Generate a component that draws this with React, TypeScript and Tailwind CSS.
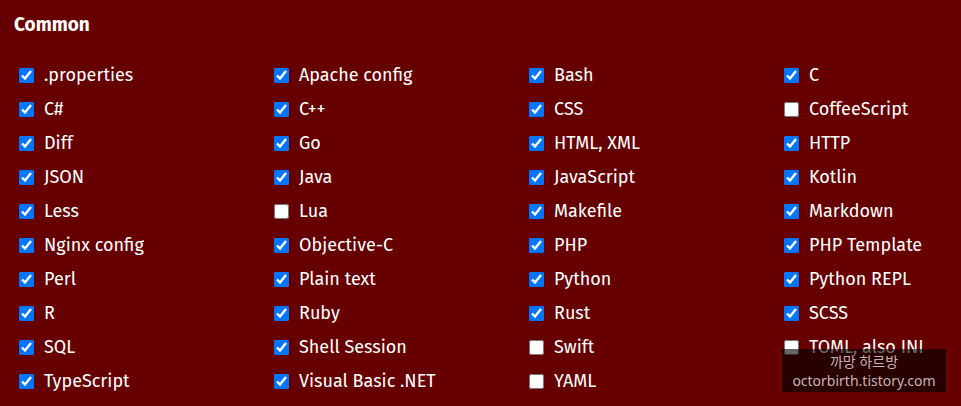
import React from "react";

const items: [string, boolean][] = [
  [".properties", true], ["Apache config", true], ["Bash", true], ["C", true],
  ["C#", true], ["C++", true], ["CSS", true], ["CoffeeScript", false],
  ["Diff", true], ["Go", true], ["HTML, XML", true], ["HTTP", true],
  ["JSON", true], ["Java", true], ["JavaScript", true], ["Kotlin", true],
  ["Less", true], ["Lua", false], ["Makefile", true], ["Markdown", true],
  ["Nginx config", true], ["Objective-C", true], ["PHP", true], ["PHP Template", true],
  ["Perl", true], ["Plain text", true], ["Python", true], ["Python REPL", true],
  ["R", true], ["Ruby", true], ["Rust", true], ["SCSS", true],
  ["SQL", true], ["Shell Session", true], ["Swift", false], ["TOML, also INI", false],
  ["TypeScript", true], ["Visual Basic .NET", true], ["YAML", false], ["", false],
];

export default function App() {
  return (
    <div
      className="relative w-[961px] h-[406px] overflow-hidden bg-[#660000] text-white"
      style={{ fontFamily: '"Fira Sans", "Lato", "Noto Sans", sans-serif' }}
    >
      <div className="pl-[14px] pt-[13px] text-[19px] font-bold leading-[24px]">Common</div>
      <div className="grid grid-cols-[255px_255px_255px_196px] pl-[19px] pt-[21px]">
        {items.map(([label, checked], i) =>
          label ? (
            <label key={i} className="flex items-center h-[34px] text-[18px]">
              <input
                type="checkbox"
                defaultChecked={checked}
                className="m-0 w-[15px] h-[15px] shrink-0"
              />
              <span className="ml-[10px] whitespace-nowrap">{label}</span>
            </label>
          ) : (
            <div key={i} />
          )
        )}
      </div>
      <div
        className="absolute left-[782px] top-[349px] w-[164px] h-[43px] bg-[rgba(0,0,0,0.6)] flex flex-col items-center justify-center text-[#c4b4b4] text-[14px] leading-[19px]"
        style={{ fontFamily: '"Noto Sans", "Noto Sans CJK KR", sans-serif' }}
      >
        <div>까망 하르방</div>
        <div>octorbirth.tistory.com</div>
      </div>
    </div>
  );
}
